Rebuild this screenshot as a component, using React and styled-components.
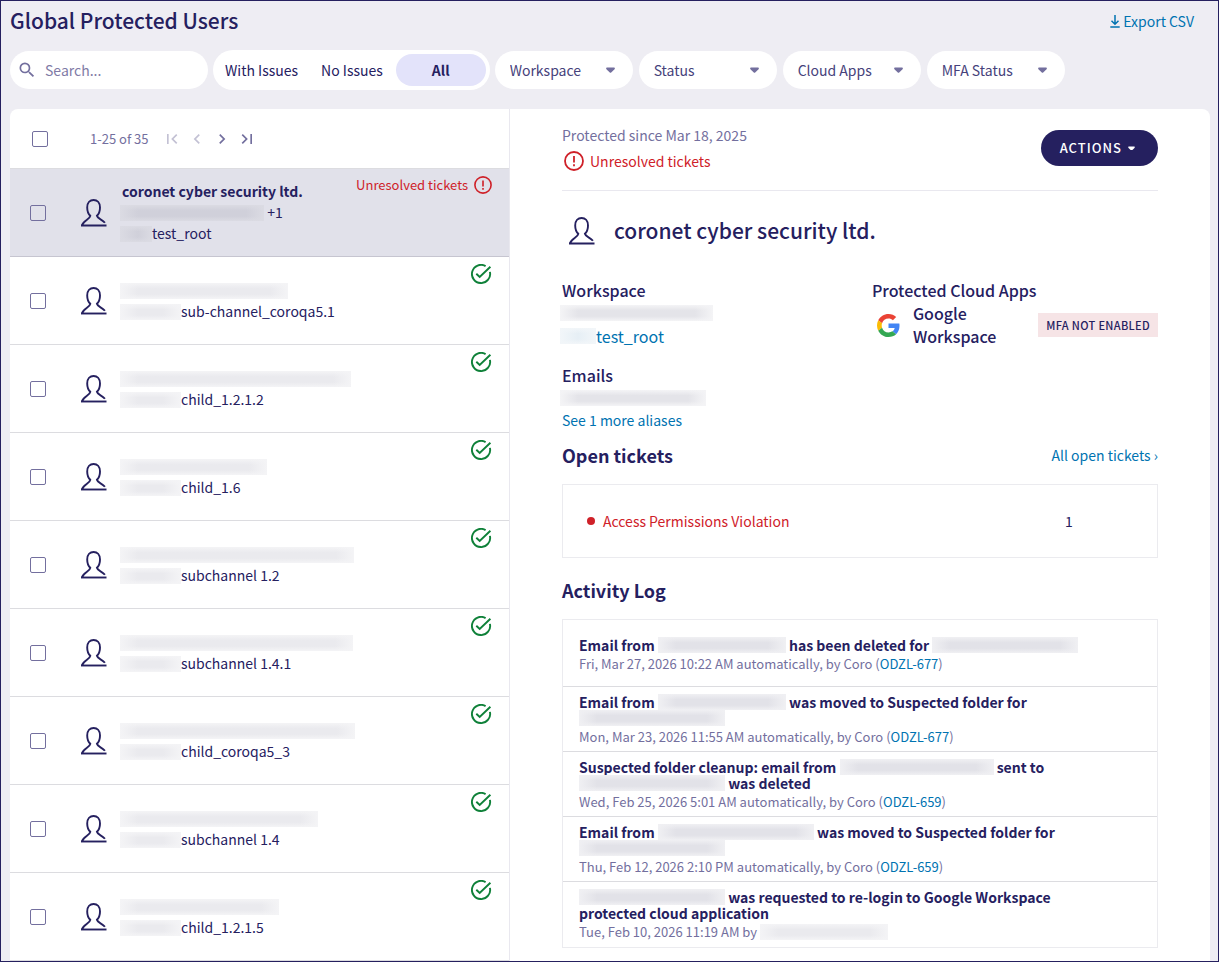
import React, { useState } from 'react';
import styled, { createGlobalStyle } from 'styled-components';
import { MdSearch, MdFirstPage, MdChevronLeft, MdChevronRight, MdLastPage } from 'react-icons/md';


const navy = '#25205f';
const muted = '#736f9e';
const blue = '#0073b1';
const red = '#cf2129';
const green = '#0f8139';

const GlobalStyle = createGlobalStyle`

    * {
        box-sizing: border-box;
    }

    body {
        margin: 0;
        color: ${navy};
        background: #eeedf3;
        font: 14px/21px "Noto Sans CJK SC", "Noto Sans", sans-serif;
    }

    button, input, select {
        font: inherit;
        color: inherit;
    }

    h1, h2, h3, p, ul {
        margin: 0;
        padding: 0;
        list-style: none;
    }

    h1, h2, h3 {
        font-weight: 500;
    }
`

const Page = styled.div`
    display: flex;
    flex-direction: column;
    height: 100vh;
    border: 1px solid ${navy};
    padding: 0 8px 0 9px;
`

const Header = styled.header`
    display: flex;
    align-items: center;
    justify-content: space-between;
    height: 40px;
    padding-right: 16px;

    h1 {
        padding-bottom: 2px;
        font-size: 21px;
    }
`

const Link = styled.a`
    color: ${blue};
    text-decoration: none;
`

const ExportLink = styled(Link)`
    display: flex;
    align-items: center;
    gap: 3px;
`

const Toolbar = styled.div`
    display: flex;
    align-items: center;
    gap: 5px;
    height: 58px;
    margin-bottom: 10px;
`

const SearchBox = styled.label`
    display: flex;
    align-items: center;
    gap: 8px;
    width: 198px;
    height: 38px;
    padding: 0 7px;
    border-radius: 19px;
    background: white;
    color: ${muted};

    input {
        flex: 1;
        min-width: 0;
        padding: 0;
        border: none;
        outline: none;
        background: none;
    }

    input::placeholder {
        color: #7f7ba6;
        opacity: 1;
    }
`

const Segments = styled.div`
    display: flex;
    align-items: center;
    gap: 3px;
    height: 40px;
    padding: 0 4px 0 2px;
    border-radius: 20px;
    background: white;
`

const Segment = styled.button`
    height: 32px;
    padding: 0 ${props => props.$active ? 36 : 10}px;
    border: none;
    border-radius: 16px;
    background: ${props => props.$active ? '#e3e3fa' : 'none'};
    font-weight: ${props => props.$active ? 600 : 400};
    cursor: pointer;
`

const Filters = styled.div`
    display: flex;
    gap: 6px;
`

const Filter = styled.div`
    display: grid;
    align-items: center;
    width: 138px;
    height: 38px;

    select, svg {
        grid-area: 1 / 1;
    }

    select {
        appearance: none;
        width: 100%;
        height: 100%;
        padding: 0 32px 0 15px;
        border: none;
        border-radius: 19px;
        background: white;
        color: #46427b;
    }

    svg {
        justify-self: end;
        margin-right: 18px;
        color: ${muted};
        pointer-events: none;
    }
`

const Panel = styled.main`
    flex: 1;
    min-height: 0;
    display: grid;
    grid-template-columns: 500px 1fr;
    border-radius: 8px 8px 0 0;
    background: white;
    overflow: hidden;
`

const UserPane = styled.section`
    border-right: 1px solid #e9e8ef;
    overflow: hidden;
`

const Pager = styled.div`
    display: flex;
    align-items: center;
    height: 60px;
    padding-left: 22px;
    border-bottom: 1px solid #dcdce0;
    color: ${muted};
    font-size: 13px;

    span {
        margin: 0 13px 0 42px;
    }
`

const PageButton = styled.button`
    display: flex;
    width: 20px;
    padding: 0;
    margin-right: 5px;
    border: none;
    background: none;
    color: ${muted};

    &:disabled {
        color: #c3c1d4;
    }
`

const CheckBox = styled.input.attrs({ type: 'checkbox' })`
    appearance: none;
    flex: none;
    width: 16px;
    height: 16px;
    margin: 0;
    border: 1px solid ${muted};
    border-radius: 2px;

    &:checked {
        background: ${navy};
    }
`

const UserRow = styled.li`
    display: flex;
    align-items: center;
    height: 88px;
    padding: 0 17px 0 20px;
    border-bottom: 1px solid ${props => props.$selected ? '#c6c5d0' : '#dcdce0'};
    background: ${props => props.$selected ? '#e1e1ea' : 'white'};

    > svg {
        flex: none;
        margin: 0 15px 0 35px;
    }
`

const UserInfo = styled.div`
    flex: 1;
    white-space: nowrap;

    h3 {
        font-size: 14px;
        font-weight: 600;
    }
`

const RowStatus = styled.div`
    display: flex;
    align-items: center;
    align-self: flex-start;
    gap: 6px;
    padding-top: 7px;
    color: ${props => props.$issue ? red : green};
    font-size: 13px;
    line-height: 16px;
`

// hidden personal data, drawn as a soft smear as wide as the value
const Redacted = styled.span`
    display: inline-block;
    vertical-align: top;
    width: ${props => props.$width}px;
    height: 16px;
    margin: ${props => props.$gap || '3px 0 2px -2px'};
    background:
        linear-gradient(90deg, ${props => props.$edge || '#f4f4f6'}, transparent 18px, transparent calc(100% - 18px), ${props => props.$edge || '#f4f4f6'}),
        linear-gradient(${props => props.$edge || '#f4f4f6'}, ${props => props.$tone || '#eaeaee'} 35%, ${props => props.$tone || '#eaeaee'} 70%, ${props => props.$edge || '#f4f4f6'});
`

const Details = styled.section`
    padding: 0 52px;
    overflow: hidden;
`

const DetailsHead = styled.div`
    display: flex;
    align-items: center;
    justify-content: space-between;
    height: 82px;
    padding-bottom: 3px;
    border-bottom: 1px solid #e9e8ef;
    color: ${muted};
    line-height: 26px;
`

const Issue = styled.div`
    display: flex;
    align-items: center;
    gap: 6px;
    padding-left: 2px;
    color: ${red};
`

const ActionsButton = styled.button`
    display: flex;
    align-items: center;
    gap: 6px;
    height: 36px;
    padding: 0 23px 0 19px;
    border: none;
    border-radius: 18px;
    background: ${navy};
    color: white;
    font-size: 13px;
    font-weight: 500;
    letter-spacing: 1px;
`

const DetailsTitle = styled.div`
    display: flex;
    align-items: center;
    gap: 19px;
    height: 79px;
    padding-left: 7px;
    margin-bottom: 9px;

    h2 {
        font-size: 21px;
    }
`

const Facts = styled.div`
    display: grid;
    grid-template-columns: 52% 48%;
    font-size: 16px;
    line-height: 23px;

    h3 {
        font-size: 16px;
    }
`

const Fact = styled.div`
    margin-bottom: ${props => props.$last ? 0 : 16}px;
`

const AliasLink = styled(Link)`
    display: block;
    font-size: 14px;
    line-height: 20px;
`

const CloudApp = styled.div`
    display: flex;
    align-items: center;
    padding-left: 5px;
    font-weight: 500;

    span {
        flex: 1;
        margin-left: 13px;
    }
`

const Badge = styled.strong`
    padding: 0 8px;
    background: #f6e4e6;
    font-size: 11px;
    font-weight: 500;
    line-height: 24px;
    letter-spacing: 0.03em;
    white-space: nowrap;
`

const SectionHead = styled.div`
    display: flex;
    align-items: flex-end;
    justify-content: space-between;
    height: ${props => props.$height}px;
    padding-bottom: 15px;
    line-height: 28px;

    h2 {
        font-size: 18px;
        font-weight: 600;
    }
`

const Box = styled.ul`
    border: 1px solid #ebebef;
`

const Ticket = styled.li`
    display: flex;
    align-items: center;
    gap: 8px;
    height: 72px;
    padding: 0 24px;
    color: ${red};

    &::before {
        content: '';
        width: 8px;
        height: 8px;
        border-radius: 50%;
        background: ${red};
    }

    span {
        width: 128px;
        margin-left: auto;
        color: ${navy};
        text-align: center;
    }
`

const LogEntry = styled.li`
    padding: 7px 48px 4px 16px;
    border-bottom: 1px solid #dcdce0;

    &:first-child {
        padding-top: 17px;
        padding-bottom: 12px;
    }

    &:last-child {
        border-bottom: none;
        padding-bottom: 5px;
    }

    h3 {
        margin-bottom: 1px;
        font-size: 14px;
        font-weight: 600;
        line-height: 16px;
    }

    p {
        color: ${muted};
        font-size: 13px;
        line-height: 20px;
    }
`

const UserIcon = () => (
    <svg width="26" height="28" viewBox="0 0 26 28" fill="none" stroke={navy} strokeWidth="1.9">
        <path d="M1 26.4C2.2 21.6 8.8 20.4 9.3 16.8C7.2 14.8 6.2 11.6 6.2 8.4C6.2 3.8 9 1 12.6 1S19 3.8 19 8.4C19 11.6 18 14.8 15.9 16.8C16.6 20 21.4 20.2 23.9 23.8" />
        <path d="M0 26.5H25.5" />
    </svg>
)

const OkIcon = () => (
    <svg width="21" height="20" viewBox="0 0 21 20" fill="none" stroke={green} strokeWidth="1.9">
        <path d="M18.9 7.9A9.1 9.1 0 1 1 14.6 2.1" />
        <path d="M5.3 9.7L8.7 13L19.4 2.8" />
    </svg>
)

const AlertIcon = ({ size }) => (
    <svg width={size} height={size} viewBox="0 0 20 20" fill="none" stroke={red} strokeWidth="1.8">
        <circle cx="10" cy="10" r="9" />
        <path d="M10 5V11.6M10 13.2V15.2" />
    </svg>
)

const Caret = ({ width = 9 }) => (
    <svg width={width} height={width * 2 / 3} viewBox="0 0 9 6" fill="currentColor">
        <path d="M1 .5H8Q9 .5 8.8 1.5L8.3 2.6L5.2 5.6Q4.5 6 3.8 5.6L.7 2.6L.2 1.5Q0 .5 1 .5Z" />
    </svg>
)

const DownloadIcon = () => (
    <svg width="10" height="13" viewBox="0 0 10 13" fill="none" stroke="currentColor" strokeWidth="1.5">
        <path d="M5 0V9M1.5 5.8L5 9.2L8.5 5.8M.3 12H9.7" />
    </svg>
)

const GoogleIcon = () => (
    <svg width="23" height="23" viewBox="0 0 48 48">
        <path fill="#EA4335" d="M24 9.5c3.54 0 6.71 1.22 9.21 3.6l6.85-6.85C35.9 2.38 30.47 0 24 0 14.62 0 6.51 5.38 2.56 13.22l7.98 6.19C12.43 13.72 17.74 9.5 24 9.5z" />
        <path fill="#4285F4" d="M46.98 24.55c0-1.57-.15-3.09-.38-4.55H24v9.02h12.94c-.58 2.96-2.26 5.48-4.78 7.18l7.73 6c4.51-4.18 7.09-10.36 7.09-17.65z" />
        <path fill="#FBBC05" d="M10.53 28.59c-.48-1.45-.76-2.99-.76-4.59s.27-3.14.76-4.59l-7.98-6.19C.92 16.46 0 20.12 0 24c0 3.88.92 7.54 2.56 10.78l7.97-6.19z" />
        <path fill="#34A853" d="M24 48c6.48 0 11.93-2.13 15.89-5.81l-7.73-6c-2.15 1.45-4.92 2.3-8.16 2.3-6.26 0-11.57-4.22-13.47-9.91l-7.98 6.19C6.51 42.62 14.62 48 24 48z" />
    </svg>
)

const users = [
    { name: 'coronet cyber security ltd.', email: 144, extra: '+1', prefix: 32, workspace: 'test_root', issue: true },
    { email: 168, prefix: 61, workspace: 'sub-channel_coroqa5.1' },
    { email: 231, prefix: 61, workspace: 'child_1.2.1.2' },
    { email: 147, prefix: 61, workspace: 'child_1.6' },
    { email: 234, prefix: 61, workspace: 'subchannel 1.2' },
    { email: 233, prefix: 61, workspace: 'subchannel 1.4.1' },
    { email: 235, prefix: 61, workspace: 'child_coroqa5_3' },
    { email: 198, prefix: 61, workspace: 'subchannel 1.4' },
    { email: 159, prefix: 61, workspace: 'child_1.2.1.5' },
]

// numbers in a title are widths of hidden addresses
const activity = [
    { title: ['Email from', 128, 'has been deleted for', 146], date: 'Fri, Mar 27, 2026 10:22 AM automatically, by Coro', ticket: 'ODZL-677' },
    { title: ['Email from', 128, 'was moved to Suspected folder for', 146], date: 'Mon, Mar 23, 2026 11:55 AM automatically, by Coro', ticket: 'ODZL-677' },
    { title: ['Suspected folder cleanup: email from', 154, 'sent to', 146, 'was deleted'], date: 'Wed, Feb 25, 2026 5:01 AM automatically, by Coro', ticket: 'ODZL-659' },
    { title: ['Email from', 156, 'was moved to Suspected folder for', 146], date: 'Thu, Feb 12, 2026 2:10 PM automatically, by Coro', ticket: 'ODZL-659' },
    { title: [146, 'was requested to re-login to Google Workspace protected cloud application'], date: 'Tue, Feb 10, 2026 11:19 AM by', by: 128 },
]

const filters = ['Workspace', 'Status', 'Cloud Apps', 'MFA Status']

function App() {

    const [segment, setSegment] = useState('All');

    return (
        <Page>
            <GlobalStyle />
            <Header>
                <h1>Global Protected Users</h1>
                <ExportLink href='#export'><DownloadIcon />Export CSV</ExportLink>
            </Header>
            <Toolbar>
                <SearchBox>
                    <MdSearch size={20} />
                    <input type='text' placeholder='Search...' aria-label='Search' />
                </SearchBox>
                <Segments>
                    {['With Issues', 'No Issues', 'All'].map(name => (
                        <Segment
                            key={name}
                            $active={name === segment}
                            onClick={() => setSegment(name)}>
                                {name}
                        </Segment>
                    ))}
                </Segments>
                <Filters>
                    {filters.map(name => (
                        <Filter key={name}>
                            <select aria-label={name}>
                                <option>{name}</option>
                            </select>
                            <Caret />
                        </Filter>
                    ))}
                </Filters>
            </Toolbar>
            <Panel>
                <UserPane>
                    <Pager>
                        <CheckBox aria-label='Select all users' />
                        <span>1-25 of 35</span>
                        <PageButton disabled aria-label='First page'><MdFirstPage size={20} /></PageButton>
                        <PageButton disabled aria-label='Previous page'><MdChevronLeft size={20} /></PageButton>
                        <PageButton aria-label='Next page'><MdChevronRight size={20} /></PageButton>
                        <PageButton aria-label='Last page'><MdLastPage size={20} /></PageButton>
                    </Pager>
                    <ul>
                        {users.map(user => {
                            const tones = user.issue ? { $tone: '#d0d0da', $edge: '#dbdbe3' } : {};
                            return (
                                <UserRow key={user.workspace} $selected={user.issue}>
                                    <CheckBox aria-label={user.workspace} />
                                    <UserIcon />
                                    <UserInfo>
                                        {user.name && <h3>{user.name}</h3>}
                                        <div><Redacted $width={user.email} {...tones} /> {user.extra}</div>
                                        <div><Redacted $width={user.prefix} {...tones} />{user.workspace}</div>
                                    </UserInfo>
                                    <RowStatus $issue={user.issue}>
                                        {user.issue ? <>Unresolved tickets<AlertIcon size={18} /></> : <OkIcon />}
                                    </RowStatus>
                                </UserRow>
                            )
                        })}
                    </ul>
                </UserPane>
                <Details>
                    <DetailsHead>
                        <div>
                            <p>Protected since Mar 18, 2025</p>
                            <Issue><AlertIcon size={20} />Unresolved tickets</Issue>
                        </div>
                        <ActionsButton>ACTIONS<Caret width={7} /></ActionsButton>
                    </DetailsHead>
                    <DetailsTitle>
                        <UserIcon />
                        <h2>coronet cyber security ltd.</h2>
                    </DetailsTitle>
                    <Facts>
                        <div>
                            <Fact>
                                <h3>Workspace</h3>
                                <div><Redacted $width={153} $tone='#e4e4e9' /></div>
                                <Redacted $width={36} $tone='#e6eff5' $edge='#f2f6f9' /><Link href='#test_root'>test_root</Link>
                            </Fact>
                            <Fact $last>
                                <h3>Emails</h3>
                                <div><Redacted $width={146} $tone='#e4e4e9' /></div>
                                <AliasLink href='#aliases'>See 1 more aliases</AliasLink>
                            </Fact>
                        </div>
                        <div>
                            <h3>Protected Cloud Apps</h3>
                            <CloudApp>
                                <GoogleIcon />
                                <span>Google Workspace</span>
                                <Badge>MFA NOT ENABLED</Badge>
                            </CloudApp>
                        </div>
                    </Facts>
                    <SectionHead $height={54}>
                        <h2>Open tickets</h2>
                        <Link href='#tickets'>All open tickets ›</Link>
                    </SectionHead>
                    <Box>
                        <Ticket>Access Permissions Violation<span>1</span></Ticket>
                    </Box>
                    <SectionHead $height={61}>
                        <h2>Activity Log</h2>
                    </SectionHead>
                    <Box>
                        {activity.map(entry => (
                            <LogEntry key={entry.date}>
                                <h3>
                                    {entry.title.map((part, i) => typeof part === 'number'
                                        ? <Redacted key={i} $width={part} $gap='0' $tone='#e2e2e8' $edge='#f0f0f3' />
                                        : ` ${part} `)}
                                </h3>
                                <p>
                                    {entry.date} {entry.ticket
                                        ? <>(<Link href={'#' + entry.ticket}>{entry.ticket}</Link>)</>
                                        : <Redacted $width={entry.by} $gap='2px 0' />}
                                </p>
                            </LogEntry>
                        ))}
                    </Box>
                </Details>
            </Panel>
        </Page>
    );
}

export default App;
